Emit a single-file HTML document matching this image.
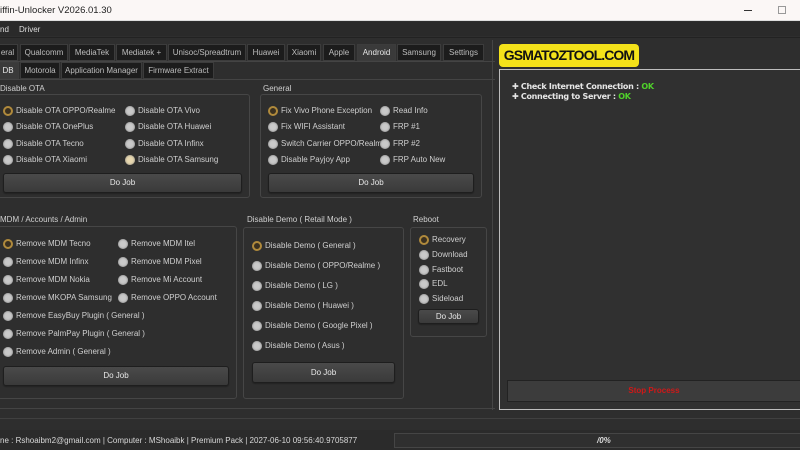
<!DOCTYPE html>
<html><head><meta charset="utf-8">
<style>
*,*:before{box-sizing:border-box;margin:0;padding:0}
body{width:800px;height:450px;overflow:hidden;background:#2e2e2e;font-family:"Liberation Sans",sans-serif;color:#d8d8d8;font-size:8px;position:relative}
.a{position:absolute;white-space:nowrap}
.tab{position:absolute;height:17px;background:#1c1c1c;border:1px solid #3c3c3c;color:#bdbdbd;font-size:8px;line-height:15px;text-align:center}
.tab.sel{background:#3a3a3a;color:#e8e8e8}
.box{position:absolute;border:1px solid #464646;border-radius:3px}
.lbl{position:absolute;font-size:8px;color:#d0d0d0}
.r{position:absolute;font-size:8px;color:#cfcfcf;line-height:10px;padding-left:13px;white-space:nowrap}
.r:before{content:"";position:absolute;left:0;top:0;width:10px;height:10px;border-radius:50%;background:#c9c9c9;box-shadow:inset 0 0 2px #777}
.r.c:before{background:#3a3020;border:2px solid #b08a3c;box-shadow:none}
.r.c2:before{background:#e8d8b0}
.btn{position:absolute;background:linear-gradient(#4a4a4a,#3a3a3a);border:1px solid #1e1e1e;border-radius:3px;color:#e8e8e8;font-size:8px;text-align:center;box-shadow:0 1px 1px #222}
</style></head><body>
<div class="a" style="left:0;top:0;width:800px;height:21px;background:#fbf7f6;border-bottom:1px solid #ddd"></div>
<div class="a" style="left:0;top:5px;font-size:9.5px;color:#222">iffin-Unlocker V2026.01.30</div>
<div class="a" style="left:744px;top:10px;width:8px;height:1px;background:#333"></div>
<div class="a" style="left:778px;top:6px;width:8px;height:8px;border:1px solid #999"></div>
<div class="a" style="left:0;top:22px;width:800px;height:14px;background:#2a2a2a"></div>
<div class="a" style="left:0;top:25px;color:#ddd">nd</div>
<div class="a" style="left:19px;top:25px;color:#ddd">Driver</div>
<div class="a" style="left:0;top:37px;width:800px;height:1px;background:#222"></div>

<div class="tab" style="left:-3px;top:44px;width:21px">eral</div>
<div class="tab" style="left:20px;top:44px;width:48px">Qualcomm</div>
<div class="tab" style="left:69px;top:44px;width:46px">MediaTek</div>
<div class="tab" style="left:116px;top:44px;width:51px">Mediatek +</div>
<div class="tab" style="left:168px;top:44px;width:78px">Unisoc/Spreadtrum</div>
<div class="tab" style="left:247px;top:44px;width:38px">Huawei</div>
<div class="tab" style="left:287px;top:44px;width:34px">Xiaomi</div>
<div class="tab" style="left:323px;top:44px;width:32px">Apple</div>
<div class="tab sel" style="left:357px;top:44px;width:39px">Android</div>
<div class="tab" style="left:397px;top:44px;width:44px">Samsung</div>
<div class="tab" style="left:443px;top:44px;width:41px">Settings</div>
<div class="a" style="left:0;top:61px;width:495px;height:1px;background:#444"></div>
<div class="tab sel" style="left:-3px;top:62px;width:22px">DB</div>
<div class="tab" style="left:20px;top:62px;width:40px">Motorola</div>
<div class="tab" style="left:61px;top:62px;width:81px">Application Manager</div>
<div class="tab" style="left:143px;top:62px;width:71px">Firmware Extract</div>
<div class="a" style="left:0;top:79px;width:495px;height:1px;background:#444"></div>

<div class="a" style="left:499px;top:44px;width:140px;height:23px;background:#f4e21a;border-radius:4px;color:#111;font-weight:bold;font-size:14px;line-height:23px;text-align:center;letter-spacing:-0.9px;overflow:hidden;font-family:'Liberation Sans',sans-serif">GSMATOZTOOL.COM</div>

<div class="lbl" style="left:0;top:84px">Disable OTA</div>
<div class="box" style="left:-2px;top:94px;width:252px;height:104px"></div>
<div class="r c" style="left:3px;top:106px">Disable OTA OPPO/Realme</div>
<div class="r" style="left:3px;top:122px">Disable OTA OnePlus</div>
<div class="r" style="left:3px;top:139px">Disable OTA Tecno</div>
<div class="r" style="left:3px;top:155px">Disable OTA Xiaomi</div>
<div class="r" style="left:125px;top:106px">Disable OTA Vivo</div>
<div class="r" style="left:125px;top:122px">Disable OTA Huawei</div>
<div class="r" style="left:125px;top:139px">Disable OTA Infinx</div>
<div class="r c2" style="left:125px;top:155px">Disable OTA Samsung</div>
<div class="btn" style="left:3px;top:173px;width:239px;height:20px;line-height:18px">Do Job</div>

<div class="lbl" style="left:263px;top:84px">General</div>
<div class="box" style="left:260px;top:94px;width:222px;height:104px"></div>
<div class="r c" style="left:268px;top:106px">Fix Vivo Phone Exception</div>
<div class="r" style="left:268px;top:122px">Fix WIFI Assistant</div>
<div class="r" style="left:268px;top:139px">Switch Carrier OPPO/Realme</div>
<div class="r" style="left:268px;top:155px">Disable Payjoy App</div>
<div class="r" style="left:380px;top:106px">Read Info</div>
<div class="r" style="left:380px;top:122px">FRP #1</div>
<div class="r" style="left:380px;top:139px">FRP #2</div>
<div class="r" style="left:380px;top:155px">FRP Auto New</div>
<div class="btn" style="left:268px;top:173px;width:206px;height:20px;line-height:18px">Do Job</div>

<div class="lbl" style="left:0;top:215px">MDM / Accounts / Admin</div>
<div class="box" style="left:-2px;top:226px;width:239px;height:173px"></div>
<div class="r c" style="left:3px;top:239px">Remove MDM Tecno</div>
<div class="r" style="left:3px;top:257px">Remove MDM Infinx</div>
<div class="r" style="left:3px;top:275px">Remove MDM Nokia</div>
<div class="r" style="left:3px;top:293px">Remove MKOPA Samsung</div>
<div class="r" style="left:3px;top:311px">Remove EasyBuy Plugin ( General )</div>
<div class="r" style="left:3px;top:329px">Remove PalmPay Plugin ( General )</div>
<div class="r" style="left:3px;top:347px">Remove Admin ( General )</div>
<div class="r" style="left:118px;top:239px">Remove MDM Itel</div>
<div class="r" style="left:118px;top:257px">Remove MDM Pixel</div>
<div class="r" style="left:118px;top:275px">Remove Mi Account</div>
<div class="r" style="left:118px;top:293px">Remove OPPO Account</div>
<div class="btn" style="left:3px;top:366px;width:226px;height:20px;line-height:18px">Do Job</div>

<div class="lbl" style="left:247px;top:215px">Disable Demo ( Retail Mode )</div>
<div class="box" style="left:243px;top:227px;width:161px;height:172px"></div>
<div class="r c" style="left:252px;top:241px">Disable Demo ( General )</div>
<div class="r" style="left:252px;top:261px">Disable Demo ( OPPO/Realme )</div>
<div class="r" style="left:252px;top:281px">Disable Demo ( LG )</div>
<div class="r" style="left:252px;top:301px">Disable Demo ( Huawei )</div>
<div class="r" style="left:252px;top:321px">Disable Demo ( Google Pixel )</div>
<div class="r" style="left:252px;top:341px">Disable Demo ( Asus )</div>
<div class="btn" style="left:252px;top:362px;width:143px;height:21px;line-height:19px">Do Job</div>

<div class="lbl" style="left:413px;top:215px">Reboot</div>
<div class="box" style="left:410px;top:227px;width:77px;height:110px"></div>
<div class="r c" style="left:419px;top:235px">Recovery</div>
<div class="r" style="left:419px;top:250px">Download</div>
<div class="r" style="left:419px;top:265px">Fastboot</div>
<div class="r" style="left:419px;top:279px">EDL</div>
<div class="r" style="left:419px;top:294px">Sideload</div>
<div class="btn" style="left:418px;top:309px;width:61px;height:15px;line-height:13px">Do Job</div>

<div class="a" style="left:0;top:408px;width:495px;height:1px;background:#444"></div>
<div class="a" style="left:492px;top:40px;width:1px;height:370px;background:#454545"></div>

<div class="a" style="left:499px;top:69px;width:302px;height:341px;border:1px solid #bdbdbd;border-right:none;background:#303030"></div>
<div class="a" style="left:512px;top:82px;font-weight:bold;font-size:8px;color:#e6e6e6;line-height:9.5px;font-family:'DejaVu Sans',sans-serif;letter-spacing:-0.3px">✚ Check Internet Connection : <span style="color:#4fd12a">OK</span><br>✚ Connecting to Server : <span style="color:#4fd12a">OK</span></div>
<div class="a" style="left:507px;top:380px;width:294px;height:22px;background:#3c3c3c;border:1px solid #222;color:#d01818;font-size:8px;line-height:20px;text-align:center;font-weight:bold">Stop Process</div>

<div class="a" style="left:0;top:418px;width:800px;height:1px;background:#404040"></div>
<div class="a" style="left:0;top:430px;width:800px;height:20px;background:#2b2b2b"></div>
<div class="a" style="left:0;top:436px;color:#d8d8d8;font-size:8px">ne : Rshoaibm2@gmail.com | Computer : MShoaibk | Premium Pack | 2027-06-10 09:56:40.9705877</div>
<div class="a" style="left:394px;top:433px;width:407px;height:15px;border:1px solid #454545;background:#2f2f2f"></div>
<div class="a" style="left:597px;top:436px;color:#ddd;font-size:8px;font-weight:bold;font-style:italic">/0%</div>
</body></html>
